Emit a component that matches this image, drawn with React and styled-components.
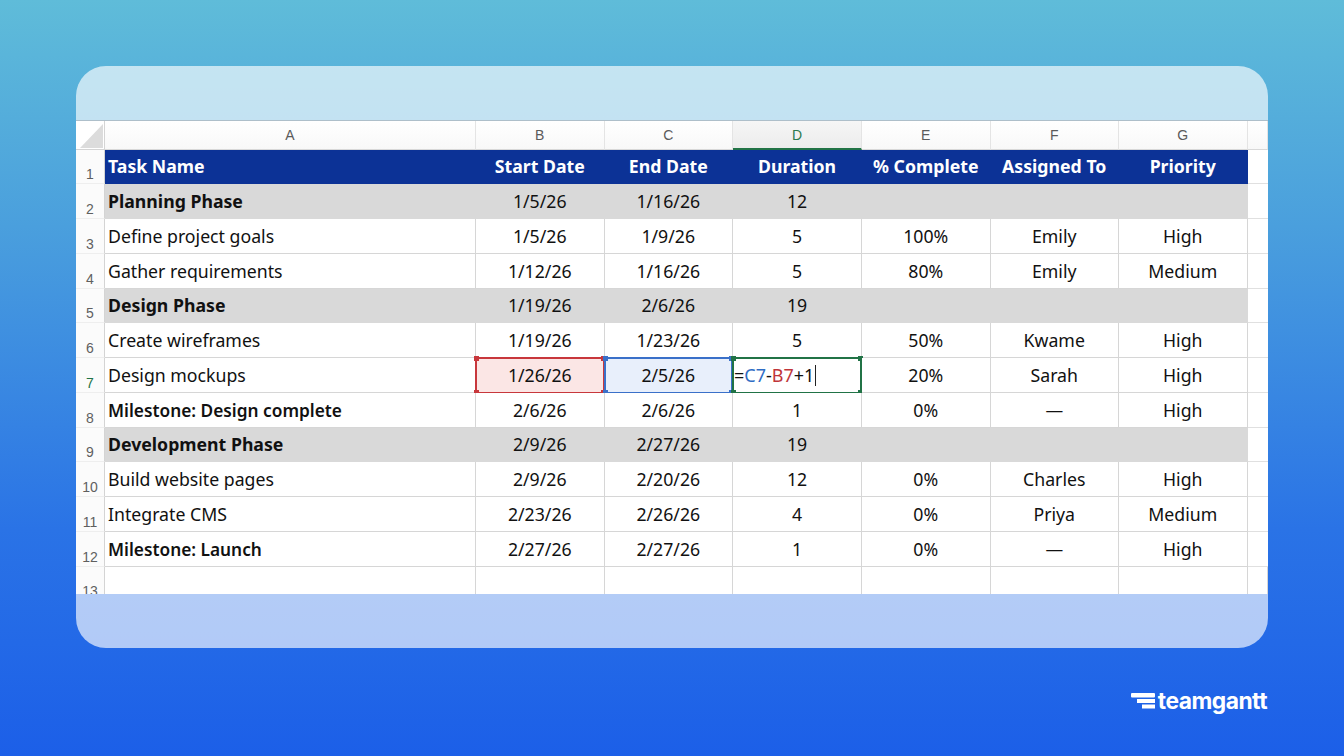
import React from 'react';
import styled, { createGlobalStyle } from 'styled-components';

const GlobalStyle = createGlobalStyle`
  html, body { margin: 0; padding: 0; }
  body { font-family: "Noto Sans", "Open Sans", sans-serif; }
`;

const Page = styled.div`
  width: 1344px;
  height: 756px;
  box-sizing: border-box;
  padding: 66px 76px 0;
  overflow: hidden;
  display: flex;
  flex-direction: column;
  background: linear-gradient(180deg, #5fbcd9 0%, #4a9fdd 30%, #2a73e6 70%, #1c5fe8 100%);
`;

const Card = styled.div`
  height: 582px;
  box-sizing: border-box;
  padding: 55px 0 54px;
  border-radius: 30px;
  overflow: hidden;
  flex: none;
  background: rgba(255, 255, 255, 0.65);
`;

const Sheet = styled.div`
  height: 473px;
  overflow: hidden;
  display: grid;
  grid-template-columns: 29px 371px 128.5px 128.5px 129px 128.5px 128.5px 128.5px 1fr;
  grid-template-rows: 29px 34.4px repeat(12, 34.75px);
  background: #fff;
  box-shadow: 0 -1px 0 #aebfca;
`;

const Corner = styled.div`
  position: relative;
  background: #fff;
  border-right: 1px solid #d4d4d4;
  border-bottom: 1px solid #d4d4d4;
  &::after {
    content: '';
    position: absolute;
    inset: 3px 1px 1px 4px;
    background: #dcdcdc;
    clip-path: polygon(100% 0, 100% 100%, 0 100%);
  }
`;

const ColHead = styled.div`
  display: flex;
  align-items: center;
  justify-content: center;
  box-sizing: border-box;
  font-family: "Liberation Sans", sans-serif;
  font-size: 14px;
  color: ${p => (p.$active ? '#2b7a4f' : '#5a5a5a')};
  background: ${p => (p.$active ? 'linear-gradient(#f6f6f6, #ececec)' : 'linear-gradient(#fff, #f8f8f8)')};
  border-right: 1px solid #e4e4e4;
  border-bottom: ${p => (p.$active ? '2px solid #217346' : '1px solid #d8d8d8')};
`;

const RowHead = styled.div`
  display: flex;
  align-items: flex-end;
  justify-content: center;
  box-sizing: border-box;
  font-family: "Liberation Sans", sans-serif;
  font-size: 14px;
  line-height: 18px;
  color: ${p => (p.$active ? '#217346' : '#5f5f5f')};
  background: #fbfbfb;
  border-right: 1px solid #d4d4d4;
  border-bottom: 1px solid #eeeeee;
`;

const rowColors = { header: '#0c3296', phase: '#d9d9d9', plain: '#fff' };

const Cell = styled.div`
  position: relative;
  display: flex;
  align-items: center;
  box-sizing: border-box;
  padding: 0 3px;
  padding-bottom: ${p => (p.$kind === 'plain' ? 0 : 1)}px;
  padding-top: ${p => (p.$weight === 600 ? 1 : 0)}px;
  font-size: ${p => (p.$weight === 600 ? 17.3 : 17.7)}px;
  white-space: nowrap;
  justify-content: ${p => (p.$left ? 'flex-start' : 'center')};
  font-weight: ${p => p.$weight || 400};
  color: ${p => (p.$kind === 'header' ? '#fff' : '#111')};
  background: ${p => rowColors[p.$kind]};
  border-right: 1px solid ${p => (p.$kind === 'plain' ? '#d6d6d6' : rowColors[p.$kind])};
  border-bottom: 1px solid ${p => (p.$kind === 'plain' ? '#d6d6d6' : rowColors[p.$kind])};
`;

const EmptyCell = styled.div`
  box-sizing: border-box;
  background: #fff;
  border-bottom: 1px solid #e0e0e0;
`;

const RangeCell = styled(Cell)`
  background: ${p => p.$fill};
`;

const FormulaCell = styled(Cell)`
  padding-left: 1px;
  font-size: 18px;
`;

const RangeBox = styled.span`
  position: absolute;
  inset: -1px -1px -2px -1px;
  border: 2px solid ${p => p.$color};
  pointer-events: none;
`;

const Handle = styled.i`
  position: absolute;
  width: 5px;
  height: 5px;
  background: ${p => p.$color};
  ${p => (p.$top ? 'top: -3px;' : 'bottom: -3px;')}
  ${p => (p.$l ? 'left: -3px;' : 'right: -3px;')}
`;

const Ref = styled.span`
  color: ${p => p.$color};
`;

const Caret = styled.span`
  display: inline-block;
  width: 1px;
  height: 21px;
  margin-left: 1px;
  background: #222;
`;

const Footer = styled.div`
  display: flex;
  justify-content: flex-end;
  align-items: center;
  gap: 3px;
  margin-top: 39px;
  margin-right: 1px;
  color: #fff;
`;

const Wordmark = styled.span`
  font-family: Inter, "Noto Sans", sans-serif;
  font-weight: 700;
  font-size: 22.8px;
  line-height: 28px;
  letter-spacing: -0.5px;
`;

const columns = ['A', 'B', 'C', 'D', 'E', 'F', 'G', ''];

const rows = [
  { kind: 'header', cells: ['Task Name', 'Start Date', 'End Date', 'Duration', '% Complete', 'Assigned To', 'Priority'] },
  { kind: 'phase', cells: ['Planning Phase', '1/5/26', '1/16/26', '12', '', '', ''] },
  { kind: 'plain', cells: ['Define project goals', '1/5/26', '1/9/26', '5', '100%', 'Emily', 'High'] },
  { kind: 'plain', cells: ['Gather requirements', '1/12/26', '1/16/26', '5', '80%', 'Emily', 'Medium'] },
  { kind: 'phase', cells: ['Design Phase', '1/19/26', '2/6/26', '19', '', '', ''] },
  { kind: 'plain', cells: ['Create wireframes', '1/19/26', '1/23/26', '5', '50%', 'Kwame', 'High'] },
  { kind: 'plain', editing: true, cells: ['Design mockups', '1/26/26', '2/5/26', '', '20%', 'Sarah', 'High'] },
  { kind: 'plain', milestone: true, cells: ['Milestone: Design complete', '2/6/26', '2/6/26', '1', '0%', '—', 'High'] },
  { kind: 'phase', cells: ['Development Phase', '2/9/26', '2/27/26', '19', '', '', ''] },
  { kind: 'plain', cells: ['Build website pages', '2/9/26', '2/20/26', '12', '0%', 'Charles', 'High'] },
  { kind: 'plain', cells: ['Integrate CMS', '2/23/26', '2/26/26', '4', '0%', 'Priya', 'Medium'] },
  { kind: 'plain', milestone: true, cells: ['Milestone: Launch', '2/27/26', '2/27/26', '1', '0%', '—', 'High'] },
];

const Range = ({ color }) => (
  <RangeBox $color={color}>
    <Handle $color={color} $top $l />
    <Handle $color={color} $top />
    <Handle $color={color} $l />
    <Handle $color={color} />
  </RangeBox>
);

const cellWeight = (row, i) => {
  if (row.kind === 'header') return 700;
  if (i !== 0) return 400;
  if (row.kind === 'phase') return 700;
  return row.milestone ? 600 : 400;
};

const renderCell = (row, text, i) => {
  if (row.editing && i === 1) {
    return <RangeCell key={i} $kind="plain" $fill="#fbe6e5">{text}<Range color="#c8373c" /></RangeCell>;
  }
  if (row.editing && i === 2) {
    return <RangeCell key={i} $kind="plain" $fill="#e8effb">{text}<Range color="#3a70c9" /></RangeCell>;
  }
  if (row.editing && i === 3) {
    return (
      <FormulaCell key={i} $kind="plain" $left>
        =<Ref $color="#2f6cc4">C7</Ref>-<Ref $color="#c0353a">B7</Ref>+1<Caret />
        <Range color="#217346" />
      </FormulaCell>
    );
  }
  return <Cell key={i} $kind={row.kind} $left={i === 0} $weight={cellWeight(row, i)}>{text}</Cell>;
};

const Logo = () => (
  <svg width="24" height="16" viewBox="0 0 24 16" fill="#fff">
    <rect x="0" y="0" width="24" height="4.5" rx="1" />
    <rect x="6" y="6" width="18" height="4" />
    <rect x="11" y="11.5" width="13" height="4" />
  </svg>
);

export default function App() {
  return (
    <Page>
      <GlobalStyle />
      <Card>
        <Sheet>
          <Corner />
          {columns.map((c, i) => (
            <ColHead key={i} $active={c === 'D'}>{c}</ColHead>
          ))}
          {rows.map((row, r) => (
            <React.Fragment key={r}>
              <RowHead $active={row.editing}>{r + 1}</RowHead>
              {row.cells.map((text, i) => renderCell(row, text, i))}
              <EmptyCell />
            </React.Fragment>
          ))}
          <RowHead>13</RowHead>
          {columns.map((c, i) => (
            <Cell key={i} $kind="plain" />
          ))}
        </Sheet>
      </Card>
      <Footer>
        <Logo />
        <Wordmark>teamgantt</Wordmark>
      </Footer>
    </Page>
  );
}
